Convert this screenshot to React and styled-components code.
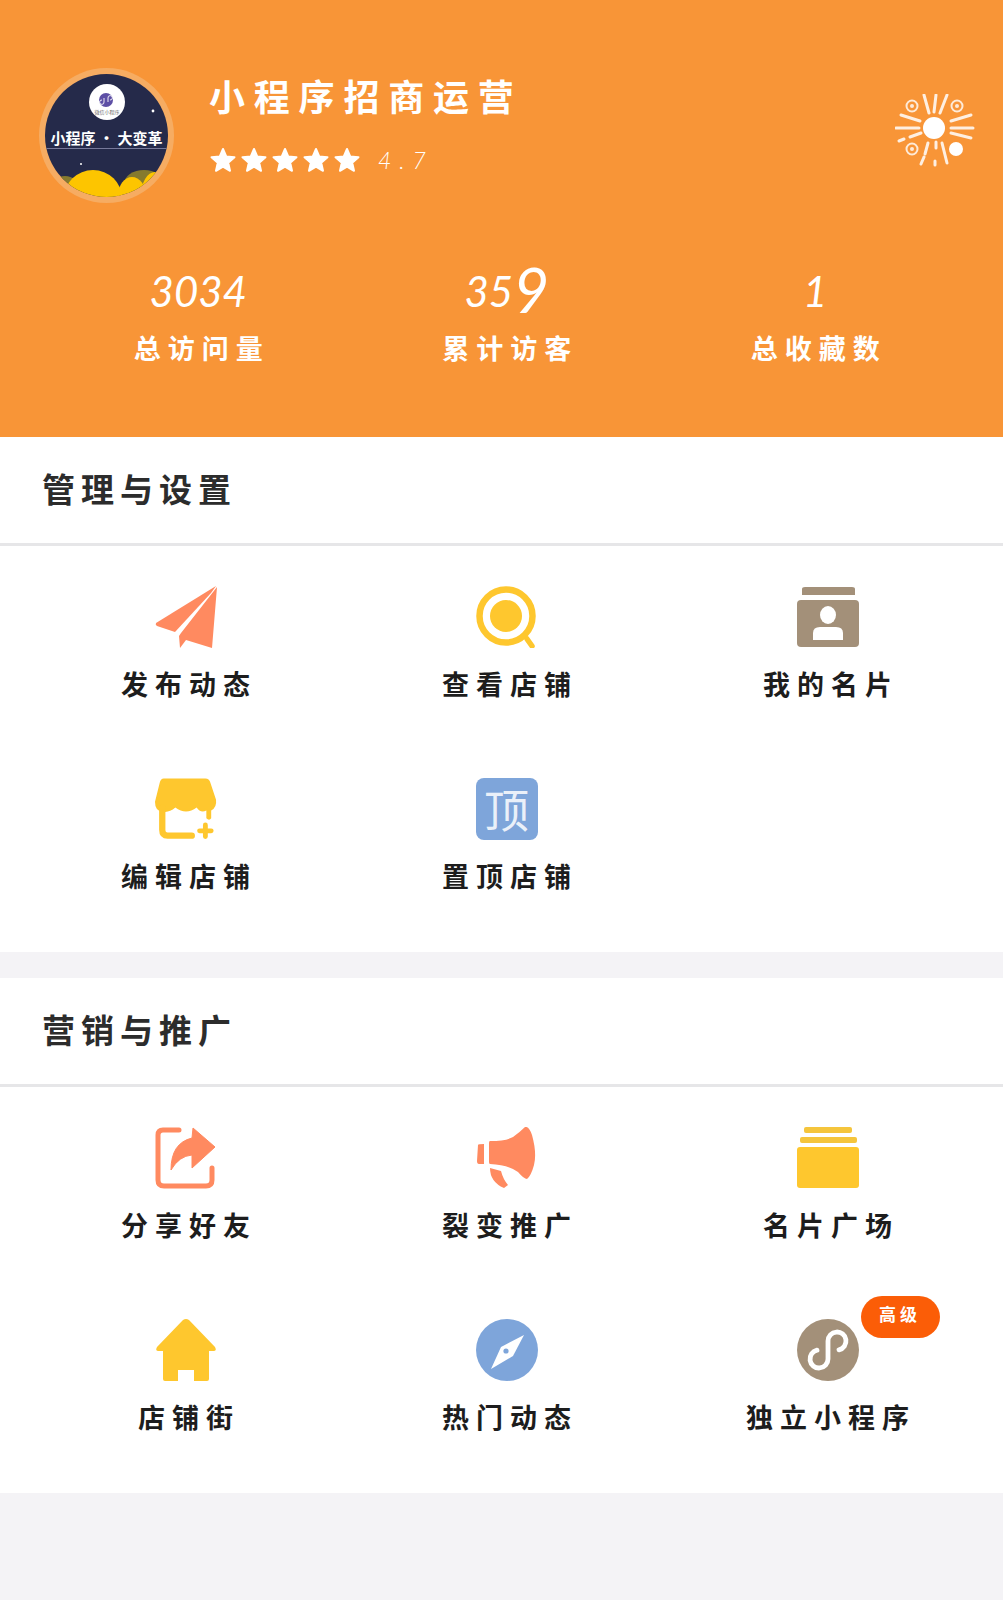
import styled, { createGlobalStyle } from "styled-components";

const GlobalStyle = createGlobalStyle`
    html, body {
        margin: 0;
        padding: 0;
        background: #f4f3f6;
    }
    * {
        box-sizing: border-box;
    }
`;

const cjk = `"Noto Sans CJK SC", "Noto Sans", sans-serif`;
const orange = "#ff8a60";
const yellow = "#fec72e";
const brown = "#a39079";
const blue = "#7ea5da";

function PlaneIcon() {
    return (
        <svg width="62" height="62" viewBox="0 0 62 62">
            <path d="M61 0 L1 37 Q0 39 2 40 L20 46 L56 7 Z" fill={orange} />
            <path d="M62 1 L26 47 L24 50 L25 62 L31 54 L57 62 Z" fill={orange} />
        </svg>
    );
}

function SearchIcon() {
    return (
        <svg width="62" height="62" viewBox="0 0 62 62">
            <circle cx="30" cy="30" r="26.5" fill="none" stroke={yellow} strokeWidth="6.5" />
            <circle cx="30" cy="30" r="16" fill={yellow} />
            <path d="M51 53 L56 60" stroke={yellow} strokeWidth="5.5" strokeLinecap="round" />
        </svg>
    );
}

function CardIcon() {
    return (
        <svg width="62" height="62" viewBox="0 0 62 62">
            <path d="M5 3 Q5 1 8 1 H55 Q58 1 58 3 V9 H5 Z" fill={brown} />
            <path d="M4 14 H58 Q62 14 62 18 V57 Q62 61 58 61 H4 Q0 61 0 57 V18 Q0 14 4 14 Z" fill={brown} />
            <ellipse cx="31" cy="29" rx="8" ry="9" fill="#fff" />
            <path d="M16 54 V47 Q16 41 23 41 H39 Q46 41 46 47 V54 Z" fill="#fff" />
        </svg>
    );
}

function ShopIcon() {
    return (
        <svg width="62" height="62" viewBox="0 0 64 63">
            <path d="M9 0 H52 Q56 0 57 4 L63 22 Q64 30 58 33 V41 Q56 44 53 41 V33 Q47 36 43 30 Q32 38 21 30 Q14 36 7 34 Q0 33 0 24 L5 4 Q6 0 9 0 Z" fill={yellow} />
            <path d="M7.5 30 V53 Q7.5 59 13 59 H38" fill="none" stroke={yellow} strokeWidth="6.5" strokeLinecap="round" />
            <path d="M52 48 V60 M46 54 H58" stroke={yellow} strokeWidth="5" strokeLinecap="round" />
        </svg>
    );
}

function TopIcon() {
    return <TopTile>顶</TopTile>;
}

function ShareIcon() {
    return (
        <svg width="62" height="62" viewBox="0 0 62 62">
            <path d="M24 3 H8 Q3 3 3 8 V53 Q3 59 9 59 H51 Q57 59 57 53 V41" fill="none" stroke={orange} strokeWidth="5" strokeLinecap="round" />
            <path d="M38 1 L60 20 L37 41 V28 Q24 29 16 43 Q16 16 37 11 Z" fill={orange} stroke={orange} strokeWidth="1" strokeLinejoin="round" />
        </svg>
    );
}

function HornIcon() {
    return (
        <svg width="62" height="62" viewBox="0 0 62 62">
            <path d="M2 18 Q2 17 8 17 V37 H3 Q1 37 1 34 Z" fill={orange} />
            <path d="M14 14 Q30 14 37 10 Q44 5 49 0 Q53 -1 56 8 Q61 26 58 38 Q55 49 51 52 Q48 52 42 45 Q33 38 14 37 Q13 37 13 35 V16 Q13 14 14 14 Z" fill={orange} />
            <path d="M14 41 L25 44 Q27 52 32 58 L28 61 Q14 55 14 41 Z" fill={orange} />
        </svg>
    );
}

function StackIcon() {
    return (
        <svg width="62" height="62" viewBox="0 0 62 62">
            <rect x="7" y="0" width="48" height="6" rx="2" fill="#f5c53c" />
            <rect x="3" y="10" width="57" height="6" rx="2" fill="#f5c53c" />
            <rect x="0" y="20" width="62" height="41" rx="3" fill={yellow} />
        </svg>
    );
}

function HomeIcon() {
    return (
        <svg width="62" height="62" viewBox="0 0 62 62">
            <path d="M28 1 Q31 -1 34 1 L60 28 Q62 32 59 32 H54 V60 Q54 62 52 62 H39 V51 H23 V62 H10 Q8 62 8 60 V32 H3 Q0 32 2 28 Z" fill={yellow} />
        </svg>
    );
}

function CompassIcon() {
    return (
        <svg width="62" height="62" viewBox="0 0 62 62">
            <circle cx="31" cy="31" r="31" fill={blue} />
            <path d="M48 16 L37 37 L15 50 L25 28 Z" fill="#fff" />
            <circle cx="30" cy="32" r="2.6" fill={blue} />
        </svg>
    );
}

function MiniIcon() {
    return (
        <svg width="62" height="62" viewBox="0 0 62 62">
            <circle cx="31" cy="31" r="31" fill={brown} />
            <path d="M20 31.2 A9 9 0 1 0 31 40 V22 A9 9 0 1 1 42 30.8" fill="none" stroke="#fff" strokeWidth="4.8" strokeLinecap="round" />
        </svg>
    );
}

function SunIcon() {
    const rays = [
        "M29 1 L34 19", "M41 1 L39 18", "M52 1 L45 19",
        "M6 21 L25 27", "M1 34 L24 34", "M15 43 L26 39", "M4 47 L9 45",
        "M76 21 L56 27", "M78 34 L56 34", "M76 44 L56 39",
        "M33 49 L30 60", "M41 48 L41 54", "M47 49 L52 69", "M29 63 L26 70", "M40 67 L40 71",
    ];
    return (
        <svg width="80" height="74" viewBox="0 0 80 74">
            {rays.map((d) => <path key={d} d={d} stroke="#fff" strokeOpacity="0.85" strokeWidth="3" strokeLinecap="round" />)}
            <circle cx="39" cy="34" r="11" fill="#fff" />
            <circle cx="17" cy="12" r="5.5" fill="none" stroke="#fff" strokeOpacity="0.8" strokeWidth="2" />
            <circle cx="17" cy="12" r="2" fill="#fff" fillOpacity="0.8" />
            <circle cx="62" cy="12" r="5.5" fill="none" stroke="#fff" strokeOpacity="0.8" strokeWidth="2" />
            <circle cx="62" cy="12" r="2" fill="#fff" fillOpacity="0.8" />
            <circle cx="17" cy="55" r="5.5" fill="none" stroke="#fff" strokeOpacity="0.8" strokeWidth="2" />
            <circle cx="17" cy="55" r="2" fill="#fff" fillOpacity="0.8" />
            <circle cx="61" cy="55" r="7" fill="#fff" />
        </svg>
    );
}

function StarIcon() {
    return (
        <svg width="28" height="28" viewBox="0 0 28 28">
            <path d="M14 3 L17.2 10.4 L25.5 11.2 L19.2 16.7 L21 24.8 L14 20.6 L7 24.8 L8.8 16.7 L2.5 11.2 L10.8 10.4 Z" fill="#fff" stroke="#fff" strokeWidth="2" strokeLinejoin="round" />
        </svg>
    );
}

function AvatarArt() {
    return (
        <svg width="123" height="123" viewBox="0 0 123 123">
            <rect width="123" height="123" fill="#252a4a" />
            <circle cx="62" cy="28" r="18" fill="#fff" />
            <circle cx="61" cy="26" r="7" fill="#5d4fa5" />
            <path d="M59 24 V28 A2.2 2.2 0 1 1 57 26 M63 28 V24 A2.2 2.2 0 1 1 65 26" fill="none" stroke="#fff" strokeWidth="0.9" />
            <text x="62" y="40" fontSize="5" textAnchor="middle" fill="#666" fontFamily={cjk}>微信小程序</text>
            <rect x="0" y="74" width="123" height="1" fill="#77799a" />
            <circle cx="8" cy="27" r="1.2" fill="#fff" />
            <circle cx="108" cy="37" r="1.4" fill="#fff" />
            <circle cx="36" cy="90" r="1" fill="#fff" />
            <ellipse cx="20" cy="114" rx="14" ry="12" fill="#857a2e" />
            <ellipse cx="99" cy="110" rx="20" ry="14" fill="#857a2e" />
            <ellipse cx="48" cy="124" rx="29" ry="28" fill="#fdc500" />
            <ellipse cx="87" cy="122" rx="14" ry="19" fill="#fdc500" />
            <ellipse cx="110" cy="122" rx="14" ry="24" fill="#fdc500" />
        </svg>
    );
}

const manageItems = [
    { label: "发布动态", icon: PlaneIcon },
    { label: "查看店铺", icon: SearchIcon },
    { label: "我的名片", icon: CardIcon },
    { label: "编辑店铺", icon: ShopIcon },
    { label: "置顶店铺", icon: TopIcon },
];

const promoteItems = [
    { label: "分享好友", icon: ShareIcon },
    { label: "裂变推广", icon: HornIcon },
    { label: "名片广场", icon: StackIcon },
    { label: "店铺街", icon: HomeIcon },
    { label: "热门动态", icon: CompassIcon },
    { label: "独立小程序", icon: MiniIcon, badge: "高级" },
];

const stats = [
    { value: "3034", label: "总访问量" },
    { value: "35", big: "9", label: "累计访客" },
    { value: "1", label: "总收藏数" },
];

function MenuSection({ title, items }) {
    return (
        <Section>
            <SectionTitle>{title}</SectionTitle>
            <MenuGrid>
                {items.map((item) => (
                    <MenuItem key={item.label}>
                        <IconBox>
                            <item.icon />
                            {item.badge && <Badge>{item.badge}</Badge>}
                        </IconBox>
                        <MenuLabel>{item.label}</MenuLabel>
                    </MenuItem>
                ))}
            </MenuGrid>
        </Section>
    );
}

export default function App() {
    return (
        <>
            <GlobalStyle />
            <Page>
                <Header>
                    <Profile>
                        <Avatar>
                            <AvatarArt />
                            <AvatarText>小程序 · 大变革</AvatarText>
                        </Avatar>
                        <ProfileInfo>
                            <ShopName>小程序招商运营</ShopName>
                            <RatingRow>
                                <Stars>
                                    {[0, 1, 2, 3, 4].map((i) => <StarIcon key={i} />)}
                                </Stars>
                                <Score>4.7</Score>
                            </RatingRow>
                        </ProfileInfo>
                        <SunBox>
                            <SunIcon />
                        </SunBox>
                    </Profile>
                    <StatsRow>
                        {stats.map((stat) => (
                            <Stat key={stat.label}>
                                <StatValue>
                                    {stat.value}
                                    {stat.big && <BigDigit>{stat.big}</BigDigit>}
                                </StatValue>
                                <StatLabel>{stat.label}</StatLabel>
                            </Stat>
                        ))}
                    </StatsRow>
                </Header>
                <MenuSection title="管理与设置" items={manageItems} />
                <MenuSection title="营销与推广" items={promoteItems} />
            </Page>
        </>
    );
}

const Page = styled.div`
    width: 1003px;
    min-height: 1600px;
    background: #f4f3f6;
    font-family: ${cjk};
`;

const Header = styled.header`
    height: 437px;
    background: #f89537;
    padding-top: 68px;
`;

const Profile = styled.div`
    display: flex;
    align-items: flex-start;
    height: 135px;
    padding: 0 28px 0 39px;
`;

const Avatar = styled.div`
    position: relative;
    flex: none;
    width: 135px;
    height: 135px;
    padding: 6px;
    border-radius: 50%;
    background: #f6ac62;

    svg {
        display: block;
        border-radius: 50%;
    }
`;

const AvatarText = styled.div`
    position: absolute;
    top: 60px;
    left: 0;
    width: 100%;
    font-size: 15px;
    font-weight: 700;
    line-height: 20px;
    text-align: center;
    color: #fff;
    white-space: nowrap;
`;

const ProfileInfo = styled.div`
    flex: 1;
    margin: 5px 0 0 35px;
`;

const ShopName = styled.div`
    font-size: 36px;
    font-weight: 700;
    line-height: 44px;
    letter-spacing: 8.8px;
    white-space: nowrap;
    color: #fff;
`;

const RatingRow = styled.div`
    display: flex;
    align-items: center;
    margin-top: 29px;
`;

const Stars = styled.div`
    display: flex;
    gap: 3px;

    svg {
        display: block;
    }
`;

const Score = styled.div`
    margin-left: 17px;
    font-family: "Lato", sans-serif;
    font-size: 23px;
    font-style: italic;
    font-weight: 300;
    letter-spacing: 8px;
    color: #fff;
`;

const SunBox = styled.div`
    flex: none;
    display: flex;
    margin-top: 26px;
`;

const StatsRow = styled.div`
    display: grid;
    grid-template-columns: repeat(3, 308.5px);
    margin-top: 63px;
    padding-left: 44px;
`;

const Stat = styled.div`
    display: flex;
    flex-direction: column;
    align-items: center;
`;

const StatValue = styled.div`
    height: 50px;
    font-family: "Lato", sans-serif;
    font-size: 42px;
    font-style: italic;
    font-weight: 400;
    line-height: 50px;
    color: #fff;
`;

const BigDigit = styled.span`
    font-size: 62px;
    font-weight: 400;
    line-height: 0;
    vertical-align: -6px;
`;

const StatLabel = styled.div`
    margin: 14px -7px 0 0;
    font-size: 27px;
    font-weight: 700;
    line-height: 36px;
    letter-spacing: 7px;
    white-space: nowrap;
    color: #fff;
`;

const Section = styled.section`
    height: 515px;
    margin-bottom: 26px;
    background: #fff;
`;

const SectionTitle = styled.h2`
    height: 109px;
    margin: 0;
    padding-left: 42px;
    border-bottom: 3px solid #e6e6e8;
    font-size: 33px;
    font-weight: 700;
    line-height: 102px;
    letter-spacing: 6px;
    color: #2c2c2c;
`;

const MenuGrid = styled.div`
    display: grid;
    grid-template-columns: repeat(3, 321px);
    grid-auto-rows: 192px;
    padding: 40px 0 0 25px;
`;

const MenuItem = styled.div`
    display: flex;
    flex-direction: column;
    align-items: center;
`;

const IconBox = styled.div`
    position: relative;
    width: 62px;
    height: 62px;

    svg {
        display: block;
    }
`;

const TopTile = styled.div`
    display: flex;
    align-items: center;
    justify-content: center;
    width: 62px;
    height: 62px;
    border-radius: 8px;
    background: ${blue};
    font-size: 45px;
    font-weight: 400;
    line-height: 62px;
    color: rgba(255, 255, 255, 0.85);
`;

const Badge = styled.div`
    position: absolute;
    top: -23px;
    left: 64px;
    width: 79px;
    height: 42px;
    border-radius: 21px;
    background: #fb5d07;
    font-size: 17px;
    font-weight: 700;
    line-height: 36px;
    text-align: center;
    letter-spacing: 4px;
    color: #fff;
`;

const MenuLabel = styled.div`
    margin: 17px -7px 0 0;
    font-size: 27px;
    font-weight: 700;
    line-height: 38px;
    letter-spacing: 7px;
    white-space: nowrap;
    color: #1d1d1d;
`;
